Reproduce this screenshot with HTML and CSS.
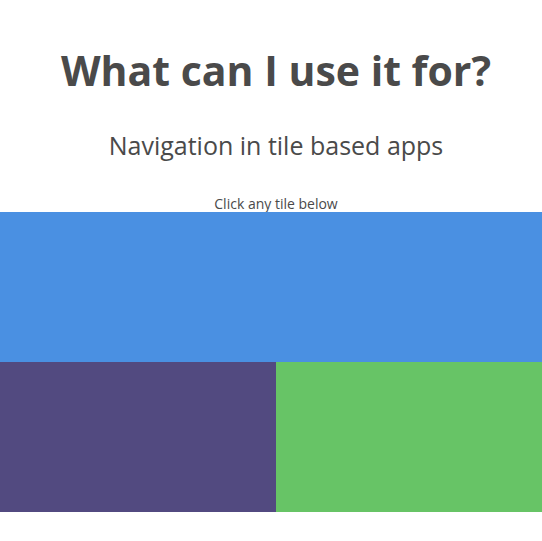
FILE: index.html
```html
<!DOCTYPE html>
<html>
<head>
<meta charset="utf-8">
<link rel="stylesheet" href="styles.css">
</head>
<body>
<div class="page">
  <header class="intro">
    <h1 class="title">What can I use it for?</h1>
    <h2 class="subtitle">Navigation in tile based apps</h2>
    <p class="hint">Click any tile below</p>
  </header>
  <main class="tiles">
    <div class="tile tile-blue"></div>
    <div class="tile-row">
      <div class="tile tile-purple"></div>
      <div class="tile tile-green"></div>
    </div>
  </main>
</div>
</body>
</html>
```
FILE: styles.css
```css
html, body {
  margin: 0;
  padding: 0;
  background: #fff;
  overflow: hidden;
}
body {
  font-family: "Open Sans", "Noto Sans", sans-serif;
  color: #4a4a4a;
}
.page {
  width: 552px;
}
.intro {
  text-align: center;
  padding-top: 40px;
}
.title {
  margin: 0;
  font-size: 41px;
  line-height: 60px;
  font-weight: 700;
}
.subtitle {
  margin: 30px 0 0;
  font-size: 25px;
  line-height: 30px;
  font-weight: 400;
}
.hint {
  margin: 36px 0 0;
  font-size: 14px;
  line-height: 16px;
}
.tiles {
  display: flex;
  flex-direction: column;
}
.tile {
  height: 150px;
}
.tile-row {
  display: flex;
}
.tile-blue { background: #4a90e2; }
.tile-purple { background: #524a80; flex: 1; }
.tile-green { background: #67c466; flex: 1; }
```
